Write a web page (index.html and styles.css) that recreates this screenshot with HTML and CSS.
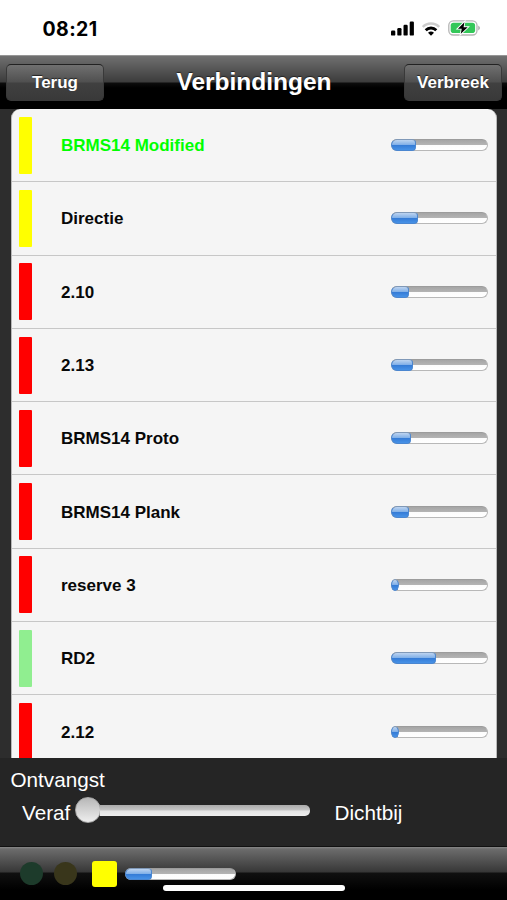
FILE: index.html
```html
<!DOCTYPE html>
<html lang="nl">
<head>
<meta charset="utf-8">
<title>Verbindingen</title>
<link rel="stylesheet" href="styles.css">
</head>
<body>
<div class="status">
  <span class="time">08:21</span>
  <div class="indicators">
    <svg class="signal" width="24" height="15" viewBox="0 0 24 15"><rect x="0" y="9.6" width="4.3" height="5" rx="1.2"/><rect x="6.3" y="7" width="4.2" height="7.6" rx="1.2"/><rect x="12.5" y="3.8" width="4.2" height="10.8" rx="1.2"/><rect x="18.7" y="0.5" width="4.2" height="14.1" rx="1.2"/></svg>
    <svg class="wifi" width="18" height="14" viewBox="0 0 18 14"><g fill="none" stroke-width="2.5"><path d="M.8 4.9A11.4 11.4 0 0 1 17.2 4.9" stroke="#ccc"/><path d="M3.7 8.3A7.3 7.3 0 0 1 14.3 8.3" stroke="#000" stroke-width="2.8"/></g><path d="M6 10.7Q9 8.5 12 10.7L9 13.8Z"/></svg>
    <svg class="battery" width="33" height="16" viewBox="0 0 33 16"><rect x=".8" y=".8" width="28.2" height="14.2" rx="4.5" fill="#fff" stroke="#b5b5b5" stroke-width="1.3"/><rect x="2.7" y="2.7" width="24.4" height="10.4" rx="2.8" fill="#34c759"/><path d="M30.4 5.5Q33.2 7.8 30.4 10.4Z" fill="#999"/><path d="M16.4 2.2L9.9 8.7H13.7L12.8 13.8L19.7 7.2H15.6Z" fill="#000" stroke="#fff" stroke-width="1.8" paint-order="stroke"/></svg>
  </div>
</div>
<header class="navbar">
  <button class="nav-button">Terug</button>
  <h1 class="title">Verbindingen</h1>
  <button class="nav-button">Verbreek</button>
</header>
<main class="content">
  <ul class="list">
    <li class="row yellow active"><i class="tag"></i><span class="name">BRMS14 Modified</span><div class="meter"><div class="fill" style="width:25px"></div></div></li>
    <li class="row yellow"><i class="tag"></i><span class="name">Directie</span><div class="meter"><div class="fill" style="width:27px"></div></div></li>
    <li class="row red"><i class="tag"></i><span class="name">2.10</span><div class="meter"><div class="fill" style="width:18px"></div></div></li>
    <li class="row red"><i class="tag"></i><span class="name">2.13</span><div class="meter"><div class="fill" style="width:22px"></div></div></li>
    <li class="row red"><i class="tag"></i><span class="name">BRMS14 Proto</span><div class="meter"><div class="fill" style="width:20px"></div></div></li>
    <li class="row red"><i class="tag"></i><span class="name">BRMS14 Plank</span><div class="meter"><div class="fill" style="width:18px"></div></div></li>
    <li class="row red"><i class="tag"></i><span class="name">reserve 3</span><div class="meter"><div class="fill short" style="width:8px"></div></div></li>
    <li class="row green"><i class="tag"></i><span class="name">RD2</span><div class="meter"><div class="fill" style="width:45px"></div></div></li>
    <li class="row red"><i class="tag"></i><span class="name">2.12</span><div class="meter"><div class="fill short" style="width:8px"></div></div></li>
  </ul>
</main>
<section class="reception">
  <div class="label">Ontvangst</div>
  <div class="range">
    <span class="far">Veraf</span>
    <div class="slider"><div class="knob"></div><div class="track"></div></div>
    <span class="near">Dichtbij</span>
  </div>
</section>
<footer class="toolbar">
  <div class="tools">
    <i class="lamp lamp-green"></i>
    <i class="lamp lamp-amber"></i>
    <i class="stop"></i>
    <div class="meter wide"><div class="fill" style="width:27px"></div></div>
  </div>
  <div class="home"></div>
</footer>
</body>
</html>
```
FILE: styles.css
```css
* { box-sizing: border-box; }

body {
  margin: 0;
  width: 507px;
  height: 900px;
  overflow: hidden;
  display: flex;
  flex-direction: column;
  background: #2d2d2d;
  font-family: "Liberation Sans", Arial, sans-serif;
}

.status {
  height: 55px;
  flex: none;
  background: #fff;
  display: flex;
  justify-content: space-between;
  align-items: flex-start;
  padding: 17px 26px 0 42.5px;
}
.time {
  font: 700 19.5px/24px Inter, sans-serif;
  letter-spacing: 0.4px;
}
.indicators {
  display: flex;
  align-items: center;
  padding-top: 3px;
}
.signal { margin-right: 7px; }
.wifi { margin: 2px 8px 0 0; }

.navbar {
  height: 54px;
  flex: none;
  display: flex;
  justify-content: space-between;
  align-items: flex-start;
  padding: 8px 5px 0 6px;
  border-top: 1px solid #969696;
  background: linear-gradient(#707070 0, #3c3c3c 26px, #0c0c0c 27px, #000 32px);
}
.nav-button {
  width: 98px;
  height: 37px;
  padding: 0;
  border: 1px solid #393939;
  border-top-color: #222;
  border-radius: 5px;
  background: linear-gradient(#707070, #505050 48%, #404040 52%, #393939);
  color: #fff;
  font: bold 17px/34px "Liberation Sans", Arial, sans-serif;
  text-shadow: 0 -1px 1px #222;
}
.title {
  margin: 0;
  color: #fff;
  font-size: 24.5px;
  line-height: 36px;
  text-shadow: 0 -1px 1px #222;
}

.content {
  height: 649px;
  flex: none;
  padding: 0 10px 0 11px;
  overflow: hidden;
}
.list {
  list-style: none;
  margin: 0;
  padding: 0;
  height: 649px;
  overflow: hidden;
  border: solid #b9b9b9;
  border-width: 0 1px;
  border-radius: 9px 9px 0 0;
  background: #f5f5f5;
}
.row {
  height: 73.3px;
  display: flex;
  align-items: center;
  padding: 0 8px 0 7px;
  border-bottom: 1px solid #c7c7c7;
}
.tag {
  width: 13px;
  height: 57px;
  border-radius: 1px;
}
.yellow .tag { background: #ff0; }
.red .tag { background: #f00; }
.green .tag { background: #90ee90; }
.name {
  margin-left: 29px;
  padding-top: 2px;
  flex: 1;
  font-size: 17px;
  font-weight: bold;
  line-height: 20px;
  color: #080808;
}
.active .name { color: #0f0; }

.meter {
  width: 97px;
  height: 12px;
  border: 1px solid #b8b8b8;
  border-top-color: #9c9c9c;
  border-radius: 6px;
  background: linear-gradient(#a5a5a5, #b3b3b3 45%, #fcfcfc 50%, #fff);
}
.fill {
  height: 12px;
  margin: -1px 0 0 -1px;
  border: 1px solid #4a86d0;
  border-top-color: #8099b8;
  border-radius: 6px 4px 4px 6px;
  background: linear-gradient(#bdd4f0, #83b1e8 46%, #347bd6 52%, #4792e7);
}
.fill.short { border-radius: 4px / 6px; }

.reception {
  height: 88px;
  flex: none;
  padding: 10px 10px 0 10.5px;
  background: #252525;
  color: #fff;
  font-size: 20.7px;
  line-height: 24px;
}
.range {
  display: flex;
  align-items: center;
  height: 24px;
  margin: 9px 0 0 11.5px;
}
.far { width: 53px; }
.slider {
  width: 235px;
  height: 26px;
  margin: -6px 24.5px 0 0;
  display: flex;
  align-items: center;
}
.knob {
  width: 26px;
  height: 26px;
  border: 1px solid #aaa;
  border-radius: 50%;
  background: linear-gradient(#b7b7b7, #eee);
}
.track {
  flex: 1;
  height: 11px;
  margin-left: -1px;
  border-radius: 0 5px 5px 0;
  background: linear-gradient(#aaa, #c5c5c5 45%, #e4e4e4 55%, #eee);
}

.toolbar {
  flex: 1;
  border-top: 1px solid #111;
  background: linear-gradient(#898989 0, #6c6c6c 2px, #373737 25px, #101010 26px, #000 43px);
}
.tools {
  display: flex;
  align-items: center;
  height: 41px;
  margin-top: 6px;
  padding-left: 20px;
}
.lamp {
  width: 23px;
  height: 23px;
  border-radius: 50%;
}
.lamp-green { background: #1d3b2b; margin-right: 11px; }
.lamp-amber { background: #39361b; margin-right: 15px; }
.stop {
  width: 25px;
  height: 26px;
  border-radius: 3px;
  background: #ff0;
}
.wide {
  width: 111px;
  margin-left: 8px;
}
.home {
  width: 182px;
  height: 6px;
  margin: -9px 0 0 163px;
  border-radius: 3px;
  background: #fff;
}
```
